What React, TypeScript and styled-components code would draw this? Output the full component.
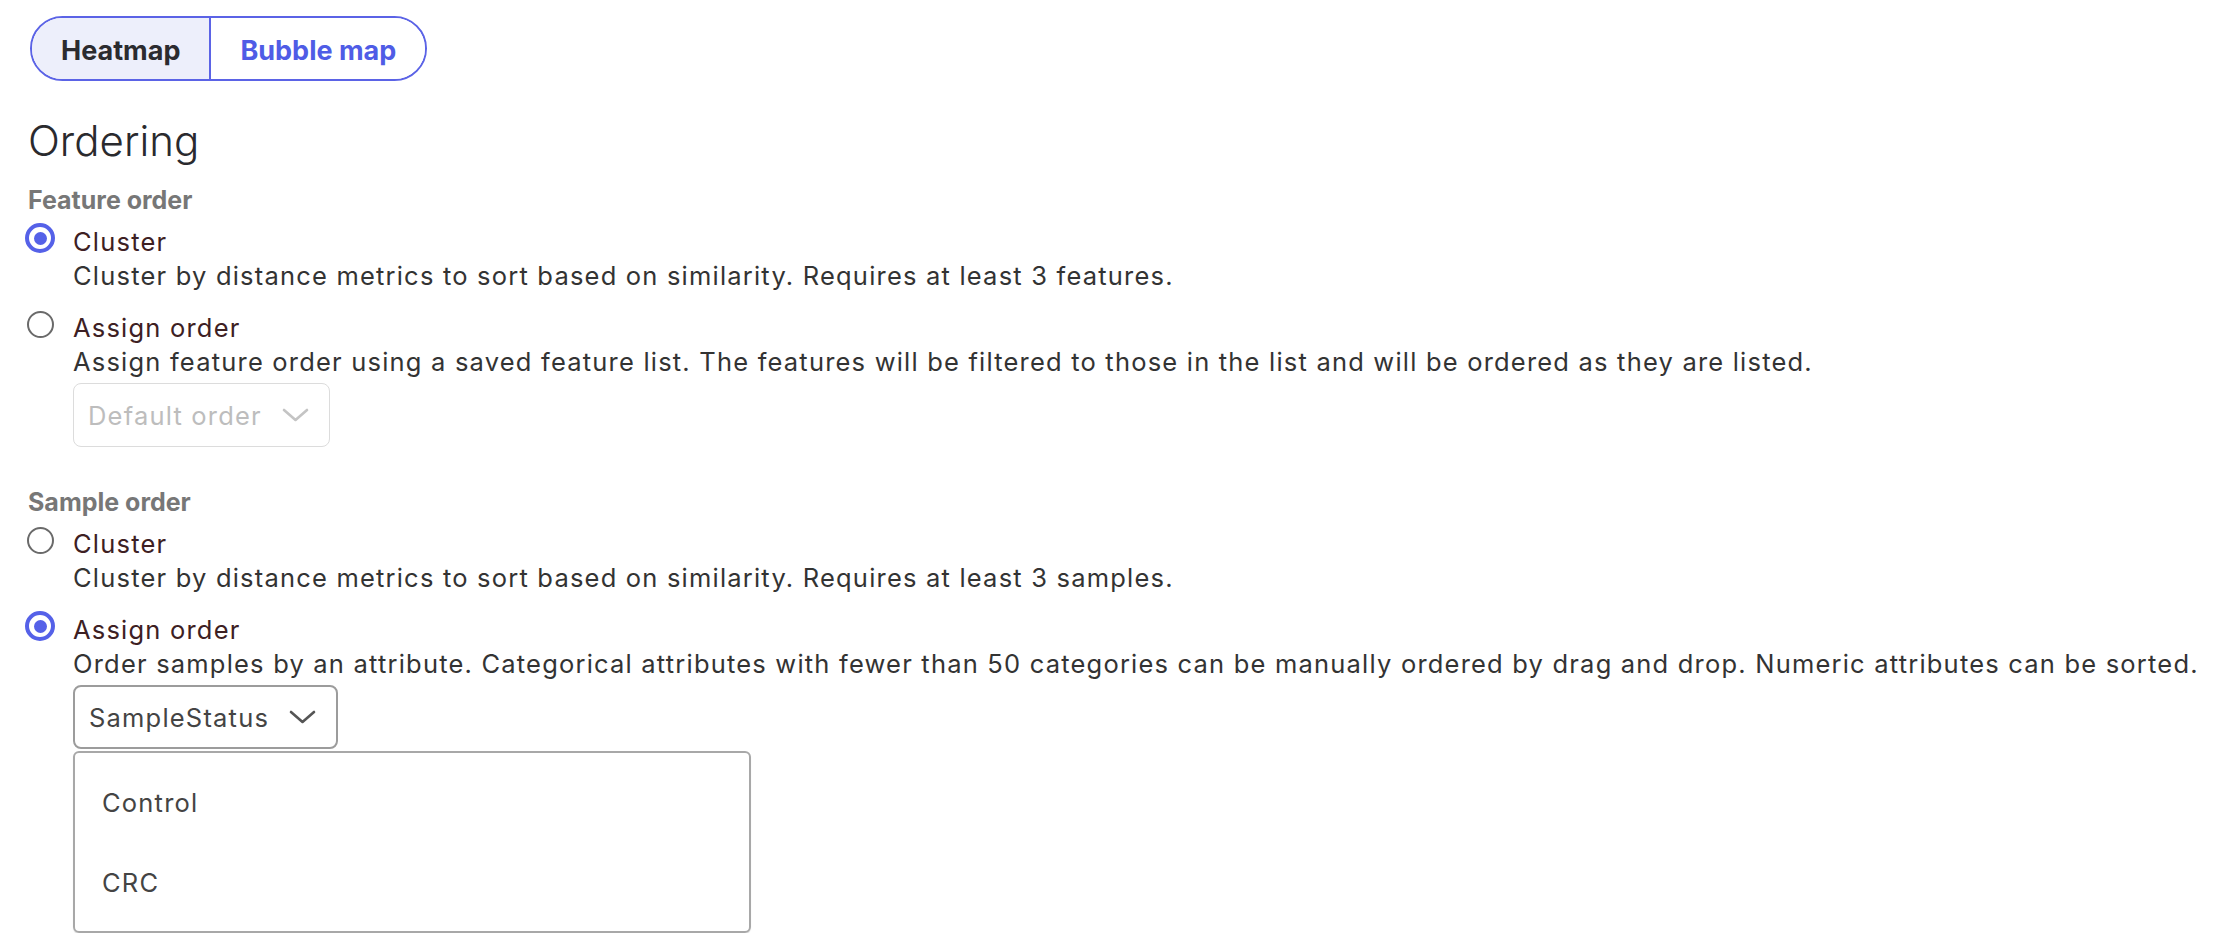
import React from "react";
import styled, { createGlobalStyle } from "styled-components";

const GlobalStyle = createGlobalStyle`
  html, body { margin: 0; padding: 0; background: #ffffff; }
  body {
    font-family: Inter, "Noto Sans", sans-serif;
    -webkit-font-smoothing: antialiased;
  }
`;

const Page = styled.div`
  display: flex;
  flex-direction: column;
  align-items: flex-start;
  padding: 16px 0 0 28px;
`;

const Toggle = styled.div`
  display: flex;
  height: 65px;
  box-sizing: border-box;
  margin-left: 2px;
  border: 2px solid #5b63e6;
  border-radius: 33px;
  overflow: hidden;
`;

const ToggleButton = styled.button<{ $active?: boolean }>`
  all: unset;
  display: flex;
  align-items: center;
  padding: 3px 29px 0;
  font-family: Inter, sans-serif;
  font-weight: 700;
  font-size: 27px;
  color: ${(p) => (p.$active ? "#2b2b2f" : "#4f5ce6")};
  background: ${(p) => (p.$active ? "#edeffb" : "#ffffff")};
  & + & {
    border-left: 2px solid #5b63e6;
  }
`;

const Title = styled.h2`
  margin: 35px 0 0;
  font-weight: 300;
  font-size: 42px;
  line-height: 50px;
  color: #2a2a2e;
`;

const SectionLabel = styled.div<{ $gap: number }>`
  margin-top: ${(p) => p.$gap}px;
  font-weight: 700;
  font-size: 25px;
  line-height: 34px;
  color: #777777;
`;

const OptionList = styled.div`
  display: flex;
  flex-direction: column;
  gap: 18px;
  margin-top: 8px;
`;

const Option = styled.div`
  display: grid;
  grid-template-columns: 30px auto;
  column-gap: 18px;
  margin-left: -3px;
`;

const RadioBox = styled.span`
  width: 30px;
  height: 30px;
  margin-top: -2px;
  display: flex;
  align-items: center;
  justify-content: center;
`;

const RadioCircle = styled.span<{ $checked?: boolean }>`
  box-sizing: border-box;
  width: ${(p) => (p.$checked ? 30 : 27)}px;
  height: ${(p) => (p.$checked ? 30 : 27)}px;
  border-radius: 50%;
  border: ${(p) => (p.$checked ? "4px solid #5561e8" : "2px solid #6a6a6a")};
  display: flex;
  align-items: center;
  justify-content: center;
  &::after {
    content: "";
    display: ${(p) => (p.$checked ? "block" : "none")};
    width: 13px;
    height: 13px;
    border-radius: 50%;
    background: #5561e8;
  }
`;

const OptionBody = styled.div`
  display: flex;
  flex-direction: column;
  align-items: flex-start;
  font-size: 25.5px;
  letter-spacing: 1.2px;
`;

const OptionLabel = styled.div`
  line-height: 34px;
  color: #3d2023;
`;

const OptionDesc = styled.div`
  line-height: 34px;
  color: #333333;
  white-space: nowrap;
`;

const Select = styled.div<{ $disabled?: boolean }>`
  margin-top: 4px;
  height: 64px;
  box-sizing: border-box;
  display: inline-flex;
  align-items: center;
  gap: 20px;
  padding: 0 20px 0 14px;
  border: ${(p) => (p.$disabled ? "1.5px solid #dcdcdc" : "2px solid #9c9c9c")};
  border-radius: 8px;
  color: ${(p) => (p.$disabled ? "#bdbdbd" : "#444444")};
`;

const Chevron = styled.svg`
  width: 27px;
  height: 14px;
  flex: none;
`;

const Listbox = styled.div`
  margin-top: 2px;
  width: 678px;
  box-sizing: border-box;
  padding: 10px 0 8px;
  border: 2px solid #a8a8a8;
  border-radius: 6px;
  box-shadow: 0 1px 1px rgba(0, 0, 0, 0.12);
`;

const ListItem = styled.div`
  padding-left: 27px;
  line-height: 80px;
  color: #444444;
`;

const ChevronIcon = ({ color }: { color: string }) => (
  <Chevron viewBox="0 0 27 14">
    <polyline
      points="2,2 13.5,12 25,2"
      fill="none"
      stroke={color}
      strokeWidth="2.6"
      strokeLinecap="round"
      strokeLinejoin="round"
    />
  </Chevron>
);

const Radio = ({ checked }: { checked?: boolean }) => (
  <RadioBox>
    <RadioCircle $checked={checked} />
  </RadioBox>
);

export default function App() {
  return (
    <>
      <GlobalStyle />
      <Page>
        <Toggle>
          <ToggleButton $active>Heatmap</ToggleButton>
          <ToggleButton>Bubble map</ToggleButton>
        </Toggle>

        <Title>Ordering</Title>

        <SectionLabel $gap={17}>Feature order</SectionLabel>
        <OptionList>
          <Option>
            <Radio checked />
            <OptionBody>
              <OptionLabel>Cluster</OptionLabel>
              <OptionDesc>
                Cluster by distance metrics to sort based on similarity. Requires at least 3 features.
              </OptionDesc>
            </OptionBody>
          </Option>
          <Option>
            <Radio />
            <OptionBody>
              <OptionLabel>Assign order</OptionLabel>
              <OptionDesc>
                Assign feature order using a saved feature list. The features will be filtered to those in the list and will be ordered as they are listed.
              </OptionDesc>
              <Select $disabled>
                Default order
                <ChevronIcon color="#c4c4c4" />
              </Select>
            </OptionBody>
          </Option>
        </OptionList>

        <SectionLabel $gap={38}>Sample order</SectionLabel>
        <OptionList>
          <Option>
            <Radio />
            <OptionBody>
              <OptionLabel>Cluster</OptionLabel>
              <OptionDesc>
                Cluster by distance metrics to sort based on similarity. Requires at least 3 samples.
              </OptionDesc>
            </OptionBody>
          </Option>
          <Option>
            <Radio checked />
            <OptionBody>
              <OptionLabel>Assign order</OptionLabel>
              <OptionDesc>
                Order samples by an attribute. Categorical attributes with fewer than 50 categories can be manually ordered by drag and drop. Numeric attributes can be sorted.
              </OptionDesc>
              <Select>
                SampleStatus
                <ChevronIcon color="#555555" />
              </Select>
              <Listbox>
                <ListItem>Control</ListItem>
                <ListItem>CRC</ListItem>
              </Listbox>
            </OptionBody>
          </Option>
        </OptionList>
      </Page>
    </>
  );
}
